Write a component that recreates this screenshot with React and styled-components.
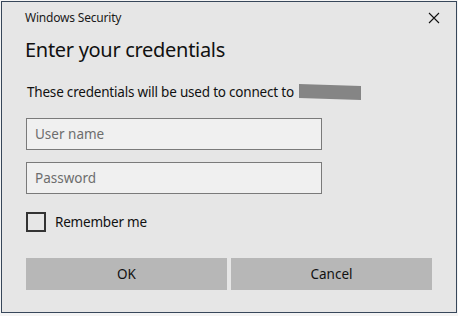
import React from "react";
import styled, { createGlobalStyle } from "styled-components";

const Global = createGlobalStyle`
  html, body {
    margin: 0;
    padding: 0;
    background: #f4f4f4;
  }
  body {
    font-family: "Noto Sans", "Open Sans", sans-serif;
  }
`;

const Dialog = styled.div`
  box-sizing: border-box;
  margin: 1px 0 0 1px;
  width: 456px;
  height: 312px;
  background: #e6e6e6;
  border: 1px solid #37475a;
  padding: 0 24px 0 23px;
  display: flex;
  flex-direction: column;
`;

const TitleBar = styled.div`
  display: flex;
  align-items: center;
  justify-content: space-between;
  height: 31px;
  margin-right: -14px;
`;

const TitleText = styled.span`
  font-size: 12px;
  color: #1a1a1a;
  letter-spacing: -0.2px;
`;

const CloseButton = styled.button`
  width: 24px;
  height: 24px;
  border: none;
  background: transparent;
  padding: 0;
  display: flex;
  align-items: center;
  justify-content: center;
`;

const Heading = styled.h1`
  margin: 4px 0 0 0;
  font-size: 20px;
  font-weight: 400;
  color: #111;
  letter-spacing: -0.3px;
  line-height: 26px;
`;

const Message = styled.p`
  margin: 20px 0 0 2px;
  font-size: 13.5px;
  color: #111;
  display: flex;
  align-items: center;
  letter-spacing: -0.2px;
  line-height: 18px;
`;

const Redacted = styled.span`
  display: inline-block;
  width: 62px;
  height: 14px;
  margin-left: 5px;
  background: #858585;
  transform: skewY(2deg);
`;

const Fields = styled.div`
  display: flex;
  flex-direction: column;
  gap: 12px;
  margin-top: 17px;
  margin-left: 1px;
`;

const Input = styled.input`
  box-sizing: border-box;
  width: 296px;
  height: 32px;
  border: 1px solid #7a7a7a;
  background: #f0f0f0;
  padding: 0 8px;
  font-family: inherit;
  font-size: 13.5px;
  outline: none;
  &::placeholder {
    color: #6d6d6d;
  }
`;

const CheckRow = styled.label`
  display: flex;
  align-items: center;
  gap: 9px;
  margin-top: 18px;
  margin-left: 1px;
  font-size: 13.5px;
  color: #111;
  letter-spacing: -0.2px;
`;

const Box = styled.span`
  box-sizing: border-box;
  width: 20px;
  height: 20px;
  border: 2px solid #333;
  background: #e6e6e6;
`;

const Buttons = styled.div`
  display: flex;
  gap: 4px;
  margin-top: 26px;
  margin-left: 1px;
`;

const Button = styled.button`
  width: 202px;
  height: 32px;
  border: none;
  background: #b7b7b7;
  font-family: inherit;
  font-size: 13.5px;
  color: #111;
  padding: 0;
`;

export default function App() {
  return (
    <>
      <Global />
      <Dialog>
        <TitleBar>
          <TitleText>Windows Security</TitleText>
          <CloseButton aria-label="Close">
            <svg width="12" height="12" viewBox="0 0 12 12">
              <path d="M1 1 L11 11 M11 1 L1 11" stroke="#111" strokeWidth="1.1" fill="none" />
            </svg>
          </CloseButton>
        </TitleBar>
        <Heading>Enter your credentials</Heading>
        <Message>
          These credentials will be used to connect to <Redacted />
        </Message>
        <Fields>
          <Input placeholder="User name" />
          <Input type="password" placeholder="Password" />
        </Fields>
        <CheckRow>
          <Box />
          Remember me
        </CheckRow>
        <Buttons>
          <Button>OK</Button>
          <Button>Cancel</Button>
        </Buttons>
      </Dialog>
    </>
  );
}
